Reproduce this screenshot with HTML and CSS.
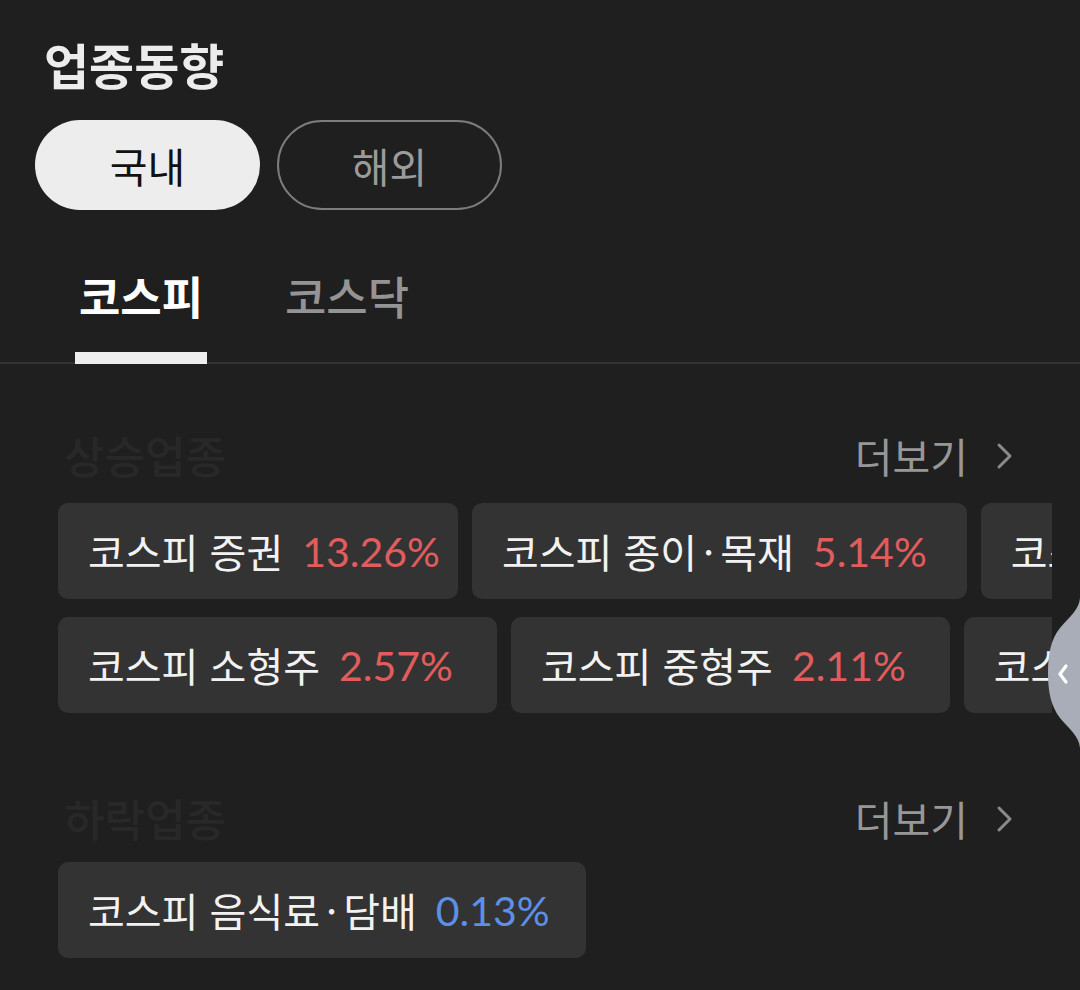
FILE: index.html
```html
<!DOCTYPE html>
<html lang="ko">
<head>
<meta charset="utf-8">
<link rel="stylesheet" href="styles.css">
</head>
<body>
<div class="page">
  <h1 class="title">업종동향</h1>
  <div class="pills">
    <button class="pill pill-on">국내</button>
    <button class="pill pill-off">해외</button>
  </div>
  <div class="tabs">
    <div class="tab tab-on">코스피</div>
    <div class="tab tab-off">코스닥</div>
  </div>

  <section class="sec sec-up">
    <div class="sec-head">
      <span class="sec-label">상승업종</span>
      <span class="more">더보기<svg class="more-ico" width="18" height="28" viewBox="0 0 18 28"><polyline points="3,3 14,14 3,25" fill="none" stroke="#8a8a8a" stroke-width="3" stroke-linecap="round" stroke-linejoin="round"/></svg></span>
    </div>
    <div class="chip-row">
      <div class="chip chip-tight"><span class="name">코스피 증권</span><span class="num up">13.26%</span></div>
      <div class="chip"><span class="name">코스피 종이<span class="dot">·</span>목재</span><span class="num up">5.14%</span></div>
      <div class="chip"><span class="name">코스피 운수장비</span><span class="num up">3.02%</span></div>
    </div>
    <div class="chip-row">
      <div class="chip chip-wide"><span class="name">코스피 소형주</span><span class="num up">2.57%</span></div>
      <div class="chip chip-wide"><span class="name">코스피 중형주</span><span class="num up">2.11%</span></div>
      <div class="chip chip-wide"><span class="name">코스피 대형주</span><span class="num up">1.84%</span></div>
    </div>
  </section>

  <section class="sec sec-down">
    <div class="sec-head">
      <span class="sec-label">하락업종</span>
      <span class="more">더보기<svg class="more-ico" width="18" height="28" viewBox="0 0 18 28"><polyline points="3,3 14,14 3,25" fill="none" stroke="#8a8a8a" stroke-width="3" stroke-linecap="round" stroke-linejoin="round"/></svg></span>
    </div>
    <div class="chip-row">
      <div class="chip chip-mid"><span class="name">코스피 음식료<span class="dot">·</span>담배</span><span class="num down">0.13%</span></div>
    </div>
  </section>

  <div class="handle">
    <svg width="32" height="150" viewBox="0 0 32 150">
      <path d="M32 0 C31 12 22 18 12 30 C3 41 0 56 0 75 C0 94 3 108 12 120 C22 132 31 138 32 150 Z" fill="#a9adb7"/>
      <polyline points="18,68 12,76 18,84" fill="none" stroke="#ffffff" stroke-width="3.2" stroke-linecap="round" stroke-linejoin="round"/>
    </svg>
  </div>
</div>
</body>
</html>
```

FILE: styles.css
```css
* { box-sizing: border-box; }
html, body {
  margin: 0;
  padding: 0;
  background: #1f1f1f;
}
body {
  font-family: "Noto Sans CJK KR", "Noto Sans", sans-serif;
  color: #f0f0f0;
  width: 1080px;
  height: 990px;
  overflow: hidden;
}
.page {
  position: relative;
  padding-top: 35px;
  height: 990px;
}
.title {
  margin: 0 0 0 44px;
  font-size: 49px;
  line-height: 58px;
  font-weight: 700;
  color: #ececec;
}
.pills {
  display: flex;
  gap: 17px;
  margin: 27px 0 0 35px;
}
.pill {
  width: 225px;
  height: 90px;
  border-radius: 45px;
  font-family: "Noto Sans CJK KR", sans-serif;
  font-size: 41px;
  line-height: 1;
  padding: 0;
  display: flex;
  align-items: center;
  justify-content: center;
}
.pill-on {
  background: #ededed;
  color: #111;
  border: none;
  font-weight: 400;
}
.pill-off {
  background: transparent;
  color: #9b9b9b;
  border: 2.5px solid #7c7c7c;
  font-weight: 400;
}
.tabs {
  display: flex;
  gap: 74px;
  margin-top: 60px;
  padding-left: 75px;
  border-bottom: 2px solid #333333;
}
.tab {
  width: 132px;
  text-align: center;
  font-size: 45px;
  line-height: 52px;
  padding-bottom: 30px;
  border-bottom: 12px solid transparent;
  margin-bottom: -2px;
}
.tab-on {
  color: #ffffff;
  font-weight: 700;
  border-bottom-color: #eeeeee;
}
.tab-off {
  color: #949494;
  font-weight: 500;
}
.sec-up { margin-top: 69px; }
.sec-down { margin-top: 83px; }
.sec-head {
  display: flex;
  justify-content: space-between;
  align-items: center;
  height: 44px;
  padding: 0 66px 0 64px;
}
.sec-label {
  font-size: 44px;
  line-height: 44px;
  color: #282828;
  font-weight: 500;
}
.more {
  display: flex;
  align-items: center;
  gap: 28px;
  font-size: 41px;
  line-height: 44px;
  color: #979797;
}
.more-ico { display: block; margin-top: 2px; }
.chip-row {
  display: flex;
  gap: 14px;
  margin: 18px 28px 0 58px;
  overflow: hidden;
}
.sec-head + .chip-row { margin-top: 26px; }
.sec-down .sec-head + .chip-row { margin-top: 22px; }
.chip {
  flex-shrink: 0;
  height: 96px;
  border-radius: 10px;
  background: #333333;
  display: flex;
  align-items: center;
  gap: 19px;
  padding: 0 40px 0 30px;
  white-space: nowrap;
}
.chip-tight { padding-right: 18px; }
.chip-wide { padding-right: 44px; }
.chip-mid { padding-right: 36px; }
.name {
  font-size: 40px;
  color: #f2f2f2;
}
.dot {
  margin: 0 6px;
}
.num {
  font-family: Lato, "Noto Sans", sans-serif;
  font-size: 41px;
}
.up { color: #e05d5d; }
.down { color: #5c8fe6; }
.handle {
  position: absolute;
  left: 1048px;
  top: 598px;
  width: 32px;
  height: 150px;
}
.handle svg { display: block; }
```
